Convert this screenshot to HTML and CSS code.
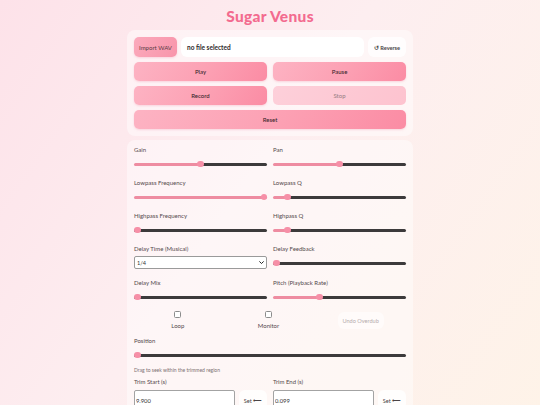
FILE: index.html
```html
<!DOCTYPE html>
<html lang="en">
<head>
<meta charset="utf-8">
<title>Sugar Venus</title>
<link rel="stylesheet" href="styles.css">
</head>
<body>
<div class="app">
  <h1 class="title">Sugar Venus</h1>

  <section class="panel transport">
    <div class="file-row">
      <button class="btn btn-import">Import WAV</button>
      <div class="file-name">no file selected</div>
      <button class="btn-ghost btn-reverse">↺ Reverse</button>
    </div>
    <div class="btn-grid">
      <button class="btn">Play</button>
      <button class="btn">Pause</button>
      <button class="btn">Record</button>
      <button class="btn is-disabled" disabled>Stop</button>
      <button class="btn span-2">Reset</button>
    </div>
  </section>

  <section class="panel controls">
    <div class="ctrl-grid">
      <div class="ctrl">
        <label class="ctrl-label">Gain</label>
        <div class="slider-box"><input class="range" type="range" style="--p:50%"></div>
      </div>
      <div class="ctrl">
        <label class="ctrl-label">Pan</label>
        <div class="slider-box"><input class="range" type="range" style="--p:50%"></div>
      </div>
      <div class="ctrl">
        <label class="ctrl-label">Lowpass Frequency</label>
        <div class="slider-box"><input class="range" type="range" value="100" style="--p:100%"></div>
      </div>
      <div class="ctrl">
        <label class="ctrl-label">Lowpass Q</label>
        <div class="slider-box"><input class="range" type="range" value="9" style="--p:11%"></div>
      </div>
      <div class="ctrl">
        <label class="ctrl-label">Highpass Frequency</label>
        <div class="slider-box"><input class="range" type="range" value="0" style="--p:0%"></div>
      </div>
      <div class="ctrl">
        <label class="ctrl-label">Highpass Q</label>
        <div class="slider-box"><input class="range" type="range" value="9" style="--p:11%"></div>
      </div>
      <div class="ctrl">
        <label class="ctrl-label">Delay Time (Musical)</label>
        <div class="select-wrap">
          <select class="select"><option>1/4</option></select>
          <svg class="chev" viewBox="0 0 8 5" width="5" height="3.2" aria-hidden="true"><path d="M1 1 L4 4 L7 1" fill="none" stroke="#222" stroke-width="1.6" stroke-linecap="round" stroke-linejoin="round"/></svg>
        </div>
      </div>
      <div class="ctrl">
        <label class="ctrl-label">Delay Feedback</label>
        <div class="slider-box"><input class="range" type="range" value="0" style="--p:0%"></div>
      </div>
      <div class="ctrl">
        <label class="ctrl-label">Delay Mix</label>
        <div class="slider-box"><input class="range" type="range" value="0" style="--p:0%"></div>
      </div>
      <div class="ctrl">
        <label class="ctrl-label">Pitch (Playback Rate)</label>
        <div class="slider-box"><input class="range" type="range" value="34" style="--p:35%"></div>
      </div>
    </div>

    <div class="toggles">
      <label class="toggle"><span class="checkbox"></span><span class="toggle-text">Loop</span></label>
      <label class="toggle"><span class="checkbox"></span><span class="toggle-text">Monitor</span></label>
      <div class="toggle-cell"><button class="btn-ghost btn-undo" disabled>Undo Overdub</button></div>
    </div>

    <div class="ctrl position">
      <label class="ctrl-label">Position</label>
      <div class="slider-box"><input class="range" type="range" value="0" style="--p:0%"></div>
    </div>
    <p class="hint">Drag to seek within the trimmed region</p>

    <div class="trim-grid">
      <div class="trim">
        <label class="ctrl-label">Trim Start (s)</label>
        <div class="trim-row">
          <input class="num" type="text" value="9.900">
          <button class="btn-ghost btn-set">Set ⟵</button>
        </div>
      </div>
      <div class="trim">
        <label class="ctrl-label">Trim End (s)</label>
        <div class="trim-row">
          <input class="num" type="text" value="0.099">
          <button class="btn-ghost btn-set">Set ⟵</button>
        </div>
      </div>
    </div>
  </section>
</div>
</body>
</html>
```

FILE: styles.css
```css
* { box-sizing: border-box; }

html, body { margin: 0; padding: 0; }

body {
  min-height: 405px;
  font-family: "Lato", "Noto Sans", sans-serif;
  color: #4b3f43;
  background: linear-gradient(125deg, #fde2e9 0%, #fdeef0 45%, #fef3e8 100%);
  overflow: hidden;
}

.app {
  width: 286px;
  margin: 0 auto;
}

.title {
  margin: 6px 0 4px;
  height: 20px;
  line-height: 20px;
  text-align: center;
  font-size: 15.5px;
  font-weight: 900;
  letter-spacing: 0.3px;
  color: #f36b8f;
}

.panel {
  background: rgba(255, 255, 255, 0.45);
  border-radius: 8px;
  padding: 7px;
  margin-bottom: 4px;
}

/* transport */
.file-row {
  display: flex;
  gap: 4px;
  height: 20px;
  margin-bottom: 5px;
}

.btn {
  border: none;
  border-radius: 5px;
  background: linear-gradient(120deg, #fdb3c3 0%, #fca0b3 55%, #fb8ca4 100%);
  box-shadow: 0 1px 2px rgba(240, 120, 150, 0.25);
  color: #3a262c;
  font-family: inherit;
  font-size: 6px;
  font-weight: 500;
  padding: 0;
  height: 19px;
}

.btn-import {
  width: 43px;
  height: 20px;
  font-weight: 400;
  color: #5b3a44;
  background: linear-gradient(120deg, #fbaabc 0%, #f895ab 100%);
}

.file-name {
  flex: 1;
  background: #fff;
  border-radius: 6px;
  display: flex;
  align-items: center;
  padding-left: 6px;
  font-size: 6.5px;
  font-weight: 700;
  color: #2e2a2b;
}

.btn-ghost {
  border: none;
  border-radius: 6px;
  background: rgba(255, 255, 255, 0.8);
  font-family: inherit;
  font-size: 5.6px;
  font-weight: 700;
  color: #4a4446;
  padding: 0;
}

.btn-reverse { width: 38px; height: 20px; }

.btn-grid {
  display: grid;
  grid-template-columns: 1fr 1fr;
  column-gap: 6px;
  row-gap: 5px;
}

.span-2 { grid-column: span 2; }

.is-disabled {
  background: linear-gradient(120deg, #fdd0da 0%, #fdc3cf 100%);
  color: #9c8388;
  box-shadow: none;
}

/* controls */
.controls { padding-top: 6px; }

.ctrl-grid {
  display: grid;
  grid-template-columns: 1fr 1fr;
  column-gap: 6px;
  row-gap: 10px;
}

.ctrl { display: flex; flex-direction: column; }

.ctrl-label {
  display: block;
  height: 8px;
  line-height: 8px;
  font-size: 6px;
  font-weight: 400;
  color: #54494c;
}

.slider-box {
  height: 10px;
  margin-top: 5px;
  display: flex;
  align-items: center;
}

.range {
  -webkit-appearance: none;
  appearance: none;
  width: 100%;
  height: 3px;
  margin: 0;
  border-radius: 2px;
  background: linear-gradient(to right, #ee8ca1 0, #ee8ca1 var(--p), #3c3a3b var(--p), #3c3a3b 100%);
  outline: none;
}

.range::-webkit-slider-thumb {
  -webkit-appearance: none;
  appearance: none;
  width: 6.5px;
  height: 6.5px;
  border-radius: 50%;
  background: #f68fa7;
  border: none;
}

.select-wrap {
  position: relative;
  margin-top: 3px;
  height: 13px;
}

.select {
  -webkit-appearance: none;
  appearance: none;
  display: block;
  width: 100%;
  height: 13px;
  font-family: inherit;
  font-size: 5.6px;
  line-height: 11px;
  color: #333;
  background: #fff;
  border: 1px solid #9a9a9a;
  border-radius: 2px;
  padding: 0 2px;
  margin: 0;
}

.chev {
  position: absolute;
  right: 3px;
  top: 5px;
}

.toggles {
  display: grid;
  grid-template-columns: 1fr 1fr 1fr;
  margin-top: 9px;
  align-items: center;
}

.toggle {
  display: flex;
  flex-direction: column;
  align-items: center;
  gap: 4px;
  padding-right: 3px;
}

.checkbox {
  width: 7px;
  height: 7px;
  border: 1px solid #8c8c8c;
  border-radius: 1.5px;
  background: #fff;
}

.toggle-text {
  font-size: 6px;
  line-height: 8px;
  color: #54494c;
}

.toggle-cell { display: flex; justify-content: center; }

.btn-undo {
  width: 46px;
  height: 17px;
  font-size: 5.6px;
  font-weight: 400;
  color: #b6abad;
  background: rgba(255, 255, 255, 0.5);
}

.position { margin-top: 7px; }

.hint {
  margin: 7px 0 0;
  font-size: 5px;
  line-height: 6px;
  color: #7c7072;
}

.trim-grid {
  display: grid;
  grid-template-columns: 1fr 1fr;
  column-gap: 6px;
  margin-top: 5px;
}

.trim-row {
  display: flex;
  gap: 4px;
  margin-top: 4px;
}

.num {
  width: 101px;
  height: 20px;
  border: 1px solid #a3a3a3;
  border-radius: 2px;
  background: #fff;
  font-family: inherit;
  font-size: 5.8px;
  color: #333;
  padding: 0 1px;
}

.btn-set {
  flex: 1;
  height: 20px;
  font-size: 5.6px;
  font-weight: 400;
  color: #4a4446;
}
```
